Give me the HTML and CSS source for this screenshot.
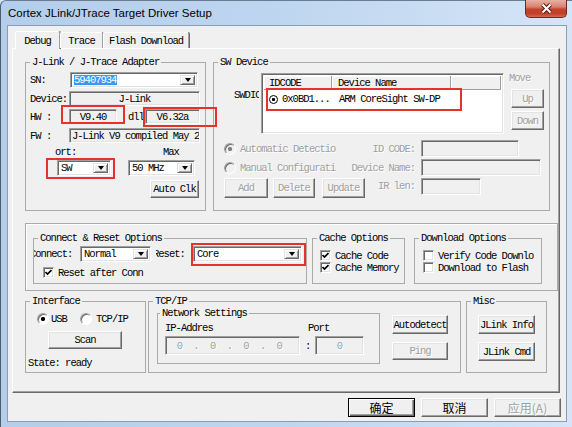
FILE: index.html
```html
<!DOCTYPE html>
<html lang="en">
<head>
<meta charset="utf-8">
<title>Cortex JLink/JTrace Target Driver Setup</title>
<link rel="stylesheet" href="styles.css">
</head>
<body>
<div class="window">
  <div class="titlebar">
    <span class="title">Cortex JLink/JTrace Target Driver Setup</span>
    <div class="close">
      <svg width="13" height="11" viewBox="0 0 13 11"><path d="M2.5 1.5 L10.5 9.5 M10.5 1.5 L2.5 9.5" stroke="#5a1b14" stroke-width="4"/><path d="M2.5 1.5 L10.5 9.5 M10.5 1.5 L2.5 9.5" stroke="#fff" stroke-width="2"/></svg>
    </div>
  </div>
  <div class="client">
    <div class="tabs">
      <div class="tab sel t-debug">Debug</div>
      <div class="tab t-trace">Trace</div>
      <div class="tab t-flash">Flash Download</div>
    </div>
    <div class="panel">
      <div class="row1">
        <fieldset class="grp g-jlink">
          <legend>J-Link / J-Trace Adapter</legend>
          <div class="jrow jr-sn">
            <span class="jl w40">SN:</span>
            <div class="combo c-sn"><span class="txt"><span class="hl">59407934</span></span><span class="dd"></span></div>
          </div>
          <div class="jrow jr-dev">
            <span class="jl w39">Device:</span>
            <div class="edit ro c f-dev">J-Link</div>
          </div>
          <div class="jrow jr-hw">
            <span class="jl w39">HW :</span>
            <div class="edit ro c f-hw">V9.40</div>
            <span class="dll">dll</span>
            <div class="edit ro c f-dll">V6.32a</div>
          </div>
          <div class="jrow jr-fw">
            <span class="jl w39">FW :</span>
            <div class="edit ro f-fw">J-Link V9 compiled May 25 2017</div>
          </div>
          <div class="jrow jr-lbl">
            <span class="l-port">ort:</span>
            <span class="l-max">Max</span>
          </div>
          <div class="jrow jr-combo">
            <div class="combo c-swsel"><span class="txt">SW</span><span class="dd"></span></div>
            <div class="combo c-mhz"><span class="txt">50 MHz</span><span class="dd"></span></div>
          </div>
          <div class="btn b-autoclk">Auto Clk</div>
        </fieldset>

        <fieldset class="grp g-sw">
          <legend>SW Device</legend>
          <div class="sw-top">
            <div class="swdio"><span>SWDIO</span></div>
            <div class="list">
              <div class="lhead"><span class="h1">IDCODE</span><span class="h2">Device Name</span><span class="h3"></span></div>
              <div class="lrow"><span class="c1"><span class="ico"></span>0x0BD1...</span><span class="c2">ARM CoreSight SW-DP</span></div>
            </div>
            <div class="move">
              <span class="dis">Move</span>
              <div class="btn dis b-up">Up</div>
              <div class="btn dis b-down">Down</div>
            </div>
          </div>
          <div class="sw-row r-auto">
            <div class="rpart"><span class="rb on dis"></span><span class="dis rt">Automatic Detection</span></div>
            <span class="rlbl dis">ID CODE:</span>
            <div class="edit ro f-id"></div>
          </div>
          <div class="sw-row r-man">
            <div class="rpart"><span class="rb dis"></span><span class="dis rt">Manual Configuration</span></div>
            <span class="rlbl dis">Device Name:</span>
            <div class="edit ro f-dn"></div>
          </div>
          <div class="sw-row r-btns">
            <div class="btn dis b-add">Add</div>
            <div class="btn dis b-del">Delete</div>
            <div class="btn dis b-upd">Update</div>
            <span class="rlbl dis l-ir">IR len:</span>
            <div class="edit ro f-ir"></div>
          </div>
        </fieldset>
      </div>

      <div class="frame">
        <fieldset class="grp g-conn">
          <legend>Connect &amp; Reset Options</legend>
          <div class="crow conn-row">
            <div class="clip l-conn"><span>Connect:</span></div>
            <div class="combo c-normal"><span class="txt">Normal</span><span class="dd"></span></div>
            <div class="clip l-reset"><span>Reset:</span></div>
            <div class="combo c-core"><span class="txt">Core</span><span class="dd"></span></div>
          </div>
          <div class="crow chk-row">
            <span class="cb"><svg width="7" height="7" viewBox="0 0 7 7"><path d="M0.5 3 L2.5 5 L6.5 1" stroke="#000" stroke-width="1.7" fill="none"/></svg></span>
            <span class="ct">Reset after Conn</span>
          </div>
        </fieldset>
        <fieldset class="grp g-cache">
          <legend>Cache Options</legend>
          <div class="ck ck1">
            <span class="cb"><svg width="7" height="7" viewBox="0 0 7 7"><path d="M0.5 3 L2.5 5 L6.5 1" stroke="#000" stroke-width="1.7" fill="none"/></svg></span>
            <span class="ct">Cache Code</span>
          </div>
          <div class="ck ck2">
            <span class="cb"><svg width="7" height="7" viewBox="0 0 7 7"><path d="M0.5 3 L2.5 5 L6.5 1" stroke="#000" stroke-width="1.7" fill="none"/></svg></span>
            <span class="ct">Cache Memory</span>
          </div>
        </fieldset>
        <fieldset class="grp g-dl">
          <legend>Download Options</legend>
          <div class="ck ck1">
            <span class="cb"></span>
            <span class="ct">Verify Code Download</span>
          </div>
          <div class="ck ck2">
            <span class="cb"></span>
            <span class="ct">Download to Flash</span>
          </div>
        </fieldset>
      </div>

      <div class="row3">
        <fieldset class="grp g-if">
          <legend>Interface</legend>
          <div class="if-radios">
            <span class="rb on"></span><span class="rt-usb">USB</span>
            <span class="rb rb-tcp"></span><span class="rt-tcp">TCP/IP</span>
          </div>
          <div class="btn b-scan">Scan</div>
          <div class="state">State: ready</div>
        </fieldset>
        <fieldset class="grp g-tcp">
          <legend>TCP/IP</legend>
          <div class="tcp-body">
            <fieldset class="grp g-net">
              <legend>Network Settings</legend>
              <div class="net-lbls"><span class="l-ip">IP-Addres</span><span>Port</span></div>
              <div class="net-fields">
                <div class="edit ro f-ip"><span>0</span><span>.</span><span>0</span><span>.</span><span>0</span><span>.</span><span>0</span></div>
                <span class="colon">:</span>
                <div class="edit ro c f-port dis">0</div>
              </div>
            </fieldset>
            <div class="tcp-btns">
              <div class="btn b-autodet">Autodetect</div>
              <div class="btn dis b-ping">Ping</div>
            </div>
          </div>
        </fieldset>
        <fieldset class="grp g-misc">
          <legend>Misc</legend>
          <div class="misc-body">
            <div class="btn b-jinfo">JLink Info</div>
            <div class="btn b-jcmd">JLink Cmd</div>
          </div>
        </fieldset>
      </div>
    </div>
    <div class="footer">
      <div class="btn fbtn def">确定</div>
      <div class="btn fbtn">取消</div>
      <div class="btn fbtn dis">应用(A)</div>
    </div>
  </div>

  <div class="mark m-hw"></div>
  <div class="mark m-dll"></div>
  <div class="mark m-sw"></div>
  <div class="mark m-row"></div>
  <div class="mark m-core"></div>
</div>
</body>
</html>
```

FILE: styles.css
```css
* { box-sizing: border-box; margin: 0; padding: 0; }
html, body { width: 572px; height: 427px; overflow: hidden; }
body { background: #d6e5f5; }

.window {
  position: relative;
  width: 572px; height: 427px;
  display: flex; flex-direction: column;
  background: linear-gradient(90deg, #b4cdea 0%, #bdd5ef 45%, #c9ddf3 75%, #d5e5f7 100%);
  border-left: 1px solid #4d5d70;
  border-top: 1px solid #6a7c92;
  border-radius: 6px 0 0 0;
  padding: 0 5px 5px 6px;
  font-family: "Liberation Mono", "DejaVu Sans Mono", monospace;
  font-size: 10.5px;
  line-height: 10px;
  letter-spacing: -1px;
  color: #000;
}

/* title bar */
.titlebar { height: 24px; flex: none; display: flex; align-items: flex-start; }
.title {
  font-family: "Liberation Sans", Arial, sans-serif;
  font-size: 11.5px; line-height: 14px; letter-spacing: 0;
  margin: 5px 0 0 1px; color: #000;
}
.close {
  margin-left: auto; margin-top: -1px;
  width: 42px; height: 18px;
  border: 1px solid #6b2a22; border-top: none;
  border-radius: 0 0 5px 5px;
  background: linear-gradient(#e9b0a4 0%, #d88271 40%, #c5412c 55%, #c0402a 80%, #d06a52 100%);
  display: flex; align-items: center; justify-content: center;
}

/* client */
.client {
  flex: 1;
  background: #f0f0f0;
  border: 1px solid #8a9db6;
  display: flex; flex-direction: column;
}

/* tabs */
.tabs { height: 22px; flex: none; display: flex; align-items: flex-end; padding-left: 7px; position: relative; z-index: 1; }
.tab {
  height: 16px; flex: none;
  display: flex; align-items: center; justify-content: center;
  background: #f0f0f0;
  border-top: 1px solid #fff; border-left: 1px solid #fff; border-right: 1px solid #a0a0a0;
  box-shadow: 1px 0 0 #696969;
  border-radius: 2px 2px 0 0;
  white-space: nowrap;
}
.tab.sel { height: 18px; margin-bottom: -1px; }
.t-debug { width: 45px; }
.t-trace { width: 43px; }
.t-flash { width: 86px; }

/* panel */
.panel {
  flex: none;
  margin-left: 4px;
  width: 548px; height: 345px;
  border: 1px solid; border-color: #fff #696969 #696969 #fff;
  box-shadow: inset -1px -1px 0 #a0a0a0;
  padding: 8px 0 0 12px;
  display: flex; flex-direction: column;
}

/* group boxes */
.grp {
  border: 1px solid #aaaaaa;
  padding: 0; min-width: 0;
  flex: none;
}
.grp > legend {
  margin-left: 4px; padding: 0 2px;
  height: 10px; line-height: 10px;
  white-space: nowrap;
}

/* generic controls */
.edit {
  display: flex; align-items: center;
  border: 1px solid; border-color: #a0a0a0 #fff #fff #a0a0a0;
  box-shadow: inset 1px 1px 0 #696969, inset -1px -1px 0 #e3e3e3;
  background: #fff;
  overflow: hidden; white-space: nowrap;
  padding: 0 3px; flex: none;
}
.edit.ro { background: #f0f0f0; }
.edit.c { justify-content: center; }

.combo {
  display: flex; align-items: stretch;
  border: 1px solid; border-color: #a0a0a0 #fff #fff #a0a0a0;
  box-shadow: inset 1px 1px 0 #696969, inset -1px -1px 0 #e3e3e3;
  background: #fff;
  padding: 2px;
  flex: none; height: 16px;
}
.combo .txt { flex: 1; display: flex; align-items: center; padding-left: 1px; overflow: hidden; white-space: nowrap; }
.combo .dd {
  flex: none; width: 15px;
  background: #f0f0f0;
  border: 1px solid; border-color: #e3e3e3 #696969 #696969 #e3e3e3;
  box-shadow: inset 1px 1px 0 #fff, inset -1px -1px 0 #a0a0a0;
  display: flex; align-items: center; justify-content: center;
}
.combo .dd::after {
  content: "";
  border-left: 3.5px solid transparent; border-right: 3.5px solid transparent;
  border-top: 4px solid #000;
}
.hl { background: #3399ff; color: #fff; padding: 1px 1px 1px 0; }

.btn {
  display: flex; align-items: center; justify-content: center;
  background: #f0f0f0;
  border: 1px solid; border-color: #fff #696969 #696969 #fff;
  box-shadow: inset -1px -1px 0 #a0a0a0, inset 1px 1px 0 #e3e3e3;
  white-space: nowrap; flex: none;
}
.dis { color: #a0a0a0; text-shadow: 1px 1px 0 #fff; }

.rb {
  width: 12px; height: 12px; flex: none;
  border-radius: 50%;
  background: #fff;
  border: 1px solid; border-color: #a0a0a0 #fff #fff #a0a0a0;
  box-shadow: inset 1px 1px 0 #696969;
}
.rb.on { background: radial-gradient(circle, #000 0, #000 1.8px, #fff 2.4px); }
.rb.dis { background: #f0f0f0; }
.rb.on.dis { background: radial-gradient(circle, #808080 0, #808080 1.8px, #f0f0f0 2.4px); }

.cb {
  width: 11px; height: 11px; flex: none;
  background: #fff;
  border: 1px solid; border-color: #a0a0a0 #fff #fff #a0a0a0;
  box-shadow: inset 1px 1px 0 #696969, inset -1px -1px 0 #e3e3e3;
  display: flex; align-items: center; justify-content: center;
}

/* J-Link group */
.g-jlink { width: 181px; height: 154px; }
.jrow { display: flex; align-items: center; padding-left: 4px; flex: none; }
.jl { flex: none; white-space: nowrap; }
.w40 { width: 40px; }
.w39 { width: 39px; }
.jr-sn { margin-top: 5px; height: 16px; }
.c-sn { width: 128px; }
.jr-dev { margin-top: 3px; height: 15px; }
.f-dev { width: 131px; height: 15px; }
.jr-hw { margin-top: 3px; height: 15px; }
.f-hw { width: 48px; height: 15px; }
.dll { margin-left: 11px; width: 17px; flex: none; }
.f-dll { width: 55px; height: 15px; }
.jr-fw { margin-top: 4px; height: 15px; }
.f-fw { width: 131px; height: 15px; padding-left: 2px; }
.jr-lbl { margin-top: 4px; height: 10px; padding-left: 29px; }
.l-port { width: 108px; flex: none; }
.jr-combo { margin-top: 3px; height: 16px; padding-left: 31px; align-items: flex-start; }
.c-swsel { width: 54px; }
.c-mhz { width: 67px; margin-left: 17px; }
.b-autoclk { margin: 4px 0 0 124px; width: 49px; height: 18px; }

/* SW device group */
.row1 { display: flex; gap: 7px; flex: none; }
.g-sw { width: 337px; height: 154px; }
.sw-top { display: flex; margin-top: 6px; height: 61px; padding-left: 20px; }
.swdio { width: 25px; margin-right: 2px; height: 10px; margin-top: 17px; overflow: hidden; white-space: nowrap; flex: none; }
.list {
  width: 243px; height: 61px; flex: none;
  background: #fff;
  border: 1px solid; border-color: #a0a0a0 #fff #fff #a0a0a0;
  box-shadow: inset 1px 1px 0 #696969, inset -1px -1px 0 #e3e3e3;
  padding: 2px 2px 0 2px;
  display: flex; flex-direction: column;
}
.lhead { display: flex; height: 14px; flex: none; }
.lhead span {
  display: flex; align-items: center;
  background: #f0f0f0;
  border-right: 1px solid #a0a0a0; border-bottom: 1px solid #a0a0a0;
  box-shadow: inset 1px 1px 0 #fff;
  white-space: nowrap;
}
.h1 { width: 68px; padding-left: 5px; }
.h2 { width: 119px; padding-left: 6px; }
.h3 { flex: 1; }
.lrow { display: flex; align-items: center; height: 18px; flex: none; white-space: nowrap; }
.c1 { width: 68px; display: flex; align-items: center; padding-left: 5px; flex: none; }
.ico {
  width: 9px; height: 9px; flex: none; margin-right: 4px;
  border-radius: 50%; border: 1.5px solid #000;
  background: radial-gradient(circle, #000 0, #000 1.3px, #fff 1.8px);
}
.c2 { padding-left: 7px; }
.move { margin-left: 5px; width: 36px; display: flex; flex-direction: column; flex: none; }
.move > span { height: 10px; }
.b-up { margin: 6px 0 0 2px; width: 33px; height: 19px; }
.b-down { margin: 3px 0 0 2px; width: 33px; height: 19px; }

.sw-row { display: flex; align-items: center; padding-left: 10px; flex: none; }
.rpart { width: 112px; display: flex; align-items: center; overflow: hidden; white-space: nowrap; flex: none; }
.rpart .rt { margin-left: 4px; }
.rlbl { width: 79px; text-align: right; flex: none; margin-right: 6px; white-space: nowrap; }
.r-auto { margin-top: 6px; height: 17px; }
.f-id { width: 98px; height: 17px; }
.r-man { margin-top: 2px; height: 17px; }
.f-dn { width: 120px; height: 17px; }
.r-btns { margin-top: 2px; height: 20px; align-items: flex-start; }
.b-add { width: 44px; height: 20px; }
.b-del { width: 42px; height: 20px; margin-left: 5px; }
.b-upd { width: 43px; height: 20px; margin-left: 7px; }
.l-ir { width: 50px; line-height: 17px; }
.f-ir { width: 60px; height: 17px; }

/* connect / cache / download frame */
.frame {
  flex: none;
  width: 533px; height: 68px;
  margin-top: 12px;
  border: 1px solid #aaaaaa;
  box-shadow: inset 1px 1px 0 #fff;
  padding: 9px 0 0 7px;
  display: flex; align-items: flex-start;
}
.g-conn { width: 274px; height: 51px; }
.crow { display: flex; align-items: center; flex: none; }
.conn-row { margin-top: 3px; height: 16px; }
.clip { overflow: hidden; white-space: nowrap; flex: none; height: 10px; }
.l-conn { width: 46px; }
.l-conn span { margin-left: -4px; }
.c-normal { width: 71px; }
.l-reset { width: 37px; margin-left: 5px; }
.l-reset span { margin-left: -3px; }
.c-core { width: 109px; }
.chk-row { margin-top: 5px; height: 11px; padding-left: 9px; }
.ct { margin-left: 4px; white-space: nowrap; }

.g-cache { width: 93px; height: 51px; margin-left: 5px; }
.g-dl { width: 128px; height: 51px; margin-left: 9px; }
.ck { display: flex; align-items: center; height: 11px; padding-left: 7px; overflow: hidden; white-space: nowrap; }
.g-dl .ck { padding-left: 8px; width: 119px; }
.ck1 { margin-top: 7px; }
.ck2 { margin-top: 1px; }

/* bottom row groups */
.row3 { display: flex; align-items: flex-start; margin-top: 5px; flex: none; }
.g-if { width: 121px; height: 77px; }
.if-radios { display: flex; align-items: center; height: 12px; margin-top: 7px; padding-left: 11px; }
.rt-usb { margin-left: 2px; width: 16px; }
.rb-tcp { margin-left: 13px; }
.rt-tcp { margin-left: 4px; }
.b-scan { margin: 6px 0 0 22px; width: 74px; height: 18px; }
.state { margin: 9px 0 0 2px; height: 10px; white-space: nowrap; }

.g-tcp { width: 313px; height: 77px; margin-left: 2px; }
.tcp-body { display: flex; align-items: flex-start; }
.g-net { width: 223px; height: 56px; margin: 2px 0 0 8px; }
.g-net > legend { margin-left: 2px; }
.net-lbls { display: flex; margin-top: 5px; height: 10px; padding-left: 7px; white-space: nowrap; }
.l-ip { width: 143px; flex: none; }
.net-fields { display: flex; align-items: center; margin-top: 3px; padding-left: 7px; }
.f-ip { width: 135px; height: 19px; padding: 0 0 0 5px; color: #a0a0a0; text-shadow: 1px 1px 0 #fff; }
.f-ip span { width: 16.67px; text-align: center; flex: none; }
.colon { width: 10px; margin-left: 5px; flex: none; color: #000; }
.f-port { width: 49px; height: 19px; }
.tcp-btns { display: flex; flex-direction: column; margin-left: 12px; }
.b-autodet { margin-top: 9px; width: 56px; height: 19px; }
.b-ping { margin-top: 8px; width: 56px; height: 18px; }

.g-misc { width: 81px; height: 77px; margin-left: 5px; }
.misc-body { display: flex; flex-direction: column; padding-left: 11px; }
.b-jinfo { margin-top: 9px; width: 57px; height: 19px; }
.b-jcmd { margin-top: 8px; width: 57px; height: 19px; }

/* footer buttons */
.footer { display: flex; justify-content: flex-end; gap: 6px; margin-top: 5px; padding-right: 5px; flex: none; }
.fbtn {
  width: 67px; height: 19px;
  font-family: "Noto Sans CJK SC", "Noto Sans CJK JP", sans-serif;
  font-size: 12px; letter-spacing: 0; line-height: 14px;
}
.def {
  border-color: #000;
  box-shadow: inset 1px 1px 0 #fff, inset -1px -1px 0 #696969, inset -2px -2px 0 #a0a0a0;
}

/* red annotation boxes (overlay) */
.mark { position: absolute; border: 2px solid #e8302c; pointer-events: none; }
.m-hw { left: 60px; top: 104px; width: 64px; height: 19px; }
.m-dll { left: 142px; top: 106px; width: 74px; height: 20px; }
.m-sw { left: 45px; top: 157px; width: 69px; height: 21px; }
.m-row { left: 265px; top: 87px; width: 196px; height: 23px; }
.m-core { left: 190px; top: 242px; width: 115px; height: 23px; }
```
